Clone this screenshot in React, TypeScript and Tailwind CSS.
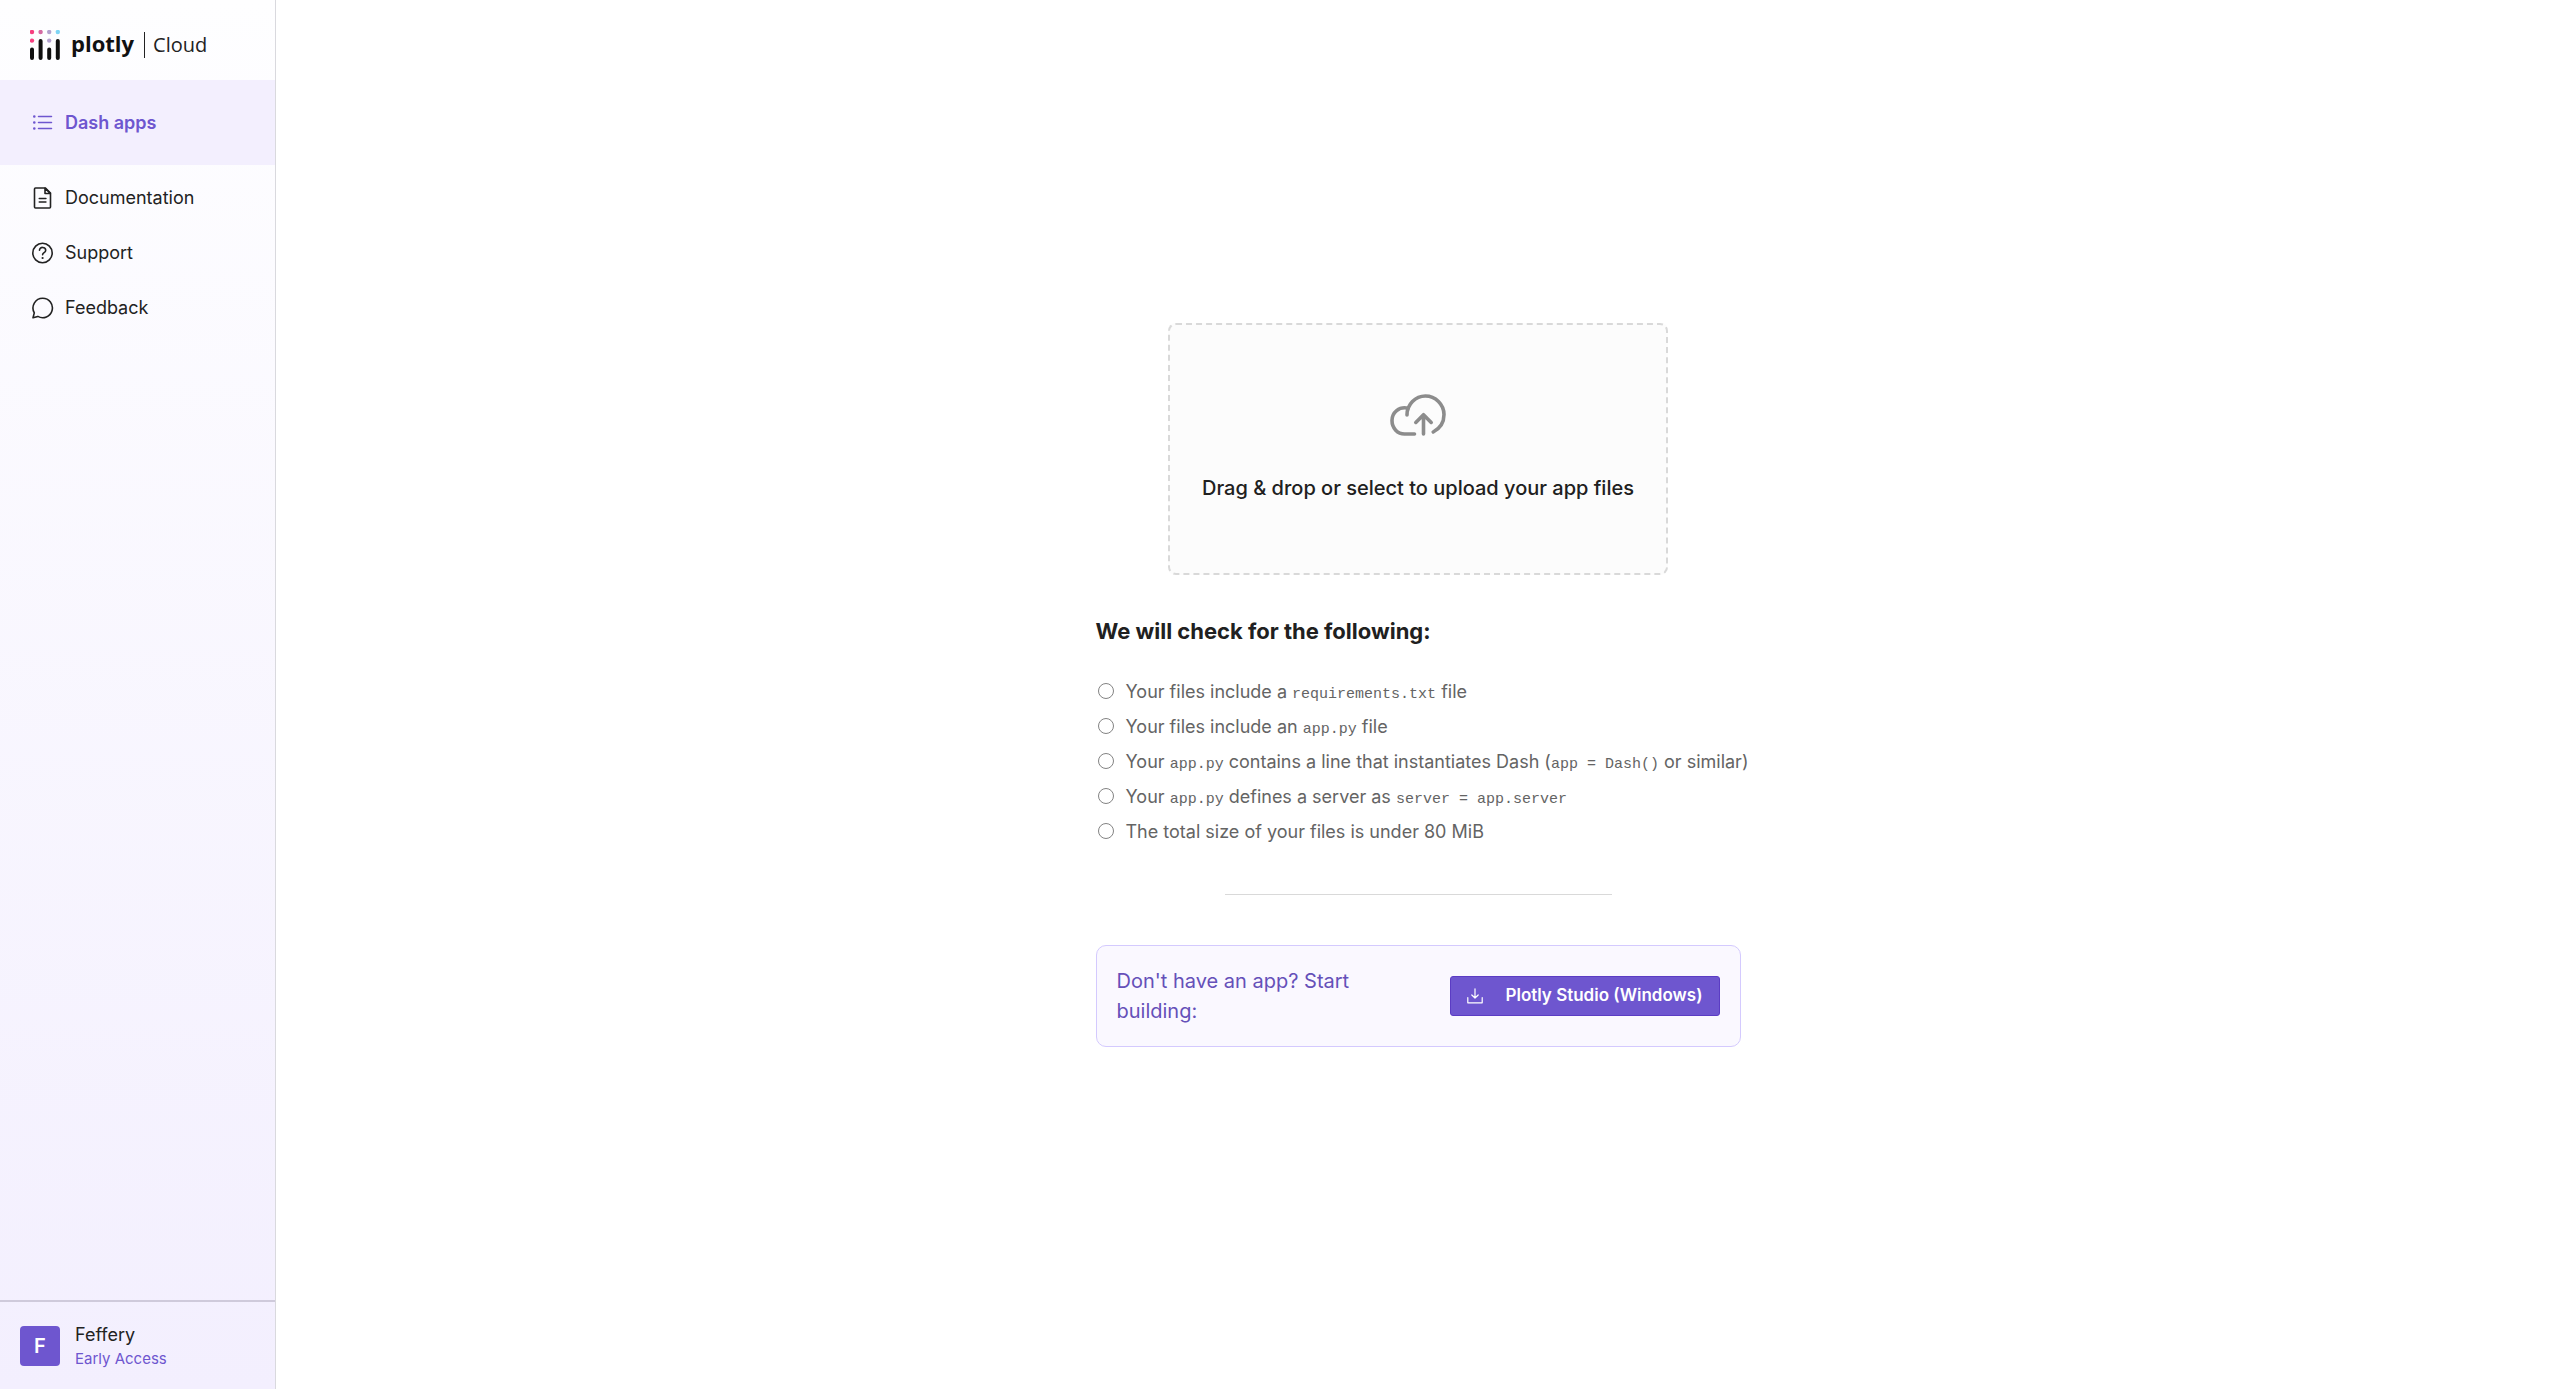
import type { ReactNode } from 'react';

const LINKS = [
  { label: 'Documentation', icon: <DocIcon /> },
  { label: 'Support', icon: <HelpIcon /> },
  { label: 'Feedback', icon: <ChatIcon /> },
];

const CHECKS: ReactNode[] = [
  <>Your files include a <Code>requirements.txt</Code> file</>,
  <>Your files include an <Code>app.py</Code> file</>,
  <>Your <Code>app.py</Code> contains a line that instantiates Dash (<Code>app = Dash()</Code> or similar)</>,
  <>Your <Code>app.py</Code> defines a server as <Code>server = app.server</Code></>,
  <>The total size of your files is under 80 MiB</>,
];

function Code({ children }: { children: ReactNode }) {
  return <code className="font-['Liberation_Mono',monospace] text-[15px] leading-none">{children}</code>;
}

function ListIcon() {
  return (
    <svg viewBox="0 0 24 24" className="size-6 shrink-0" fill="none" stroke="currentColor" strokeWidth="1.5" strokeLinecap="round">
      <path d="M7.5 5.500h13M7.500 11.500h13M7.500 17.500h13" />
      <path d="M3.300 5.500h.01M3.300 11.500h.01M3.300 17.500h.01" strokeWidth="2.600" />
    </svg>
  );
}

function DocIcon() {
  return (
    <svg viewBox="0 0 24 24" className="size-6 shrink-0" fill="none" stroke="currentColor" strokeWidth="1.6" strokeLinecap="round" strokeLinejoin="round">
      <path d="M3.500 21V3a1 1 0 0 1 1-1h10L19.500 7v14a1 1 0 0 1-1 1h-14a1 1 0 0 1-1-1z" />
      <path d="M14 2.200v5.300h5.300z" />
      <path d="M8.300 12.500h6.600M8.300 16h6.600" />
    </svg>
  );
}

function HelpIcon() {
  return (
    <svg viewBox="0 0 24 24" className="size-6 shrink-0" fill="none" stroke="currentColor" strokeWidth="1.6" strokeLinecap="round" strokeLinejoin="round">
      <circle cx="11.500" cy="12" r="9.700" />
      <path d="M8.500 9.200c0-3.800 6.200-3.600 6.200 0 0 2.600-3.100 2.200-3.100 4.600" />
      <path d="M11.600 17h.01" strokeWidth="2.200" />
    </svg>
  );
}

function ChatIcon() {
  return (
    <svg viewBox="0 0 24 24" className="size-6 shrink-0" fill="none" stroke="currentColor" strokeWidth="1.6" strokeLinecap="round" strokeLinejoin="round">
      <path d="M11.700 2.300a9.700 9.700 0 1 1-4.850 18.100L2 21.700l1.300-4.850A9.700 9.700 0 0 1 11.700 2.300z" />
    </svg>
  );
}

function CloudUploadIcon() {
  return (
    <svg viewBox="0 0 56 42" className="h-[42px] w-14" fill="none" stroke="#8c8c8c" strokeWidth="3.6" strokeLinecap="round" strokeLinejoin="round">
      <path d="M17 21c0-10.6 8.4-19 18.4-19S54 10.400 54 20.600c0 7.800-4.200 14-10.800 17.400" />
      <path d="M18 14.200C9 12.200 2 18.600 2 26.600 2 34.400 7.600 40 14.600 40H24.500" />
      <path d="M33.500 40V21M25.800 28.400l7.700-7.700 7.700 7.700" />
    </svg>
  );
}

function DownloadIcon() {
  return (
    <svg viewBox="0 0 16 16" className="size-4 shrink-0" fill="none" stroke="currentColor" strokeWidth="1.2" strokeLinecap="round" strokeLinejoin="round">
      <path d="M8 .8v9M4.800 7L8 10l3.200-3M.8 9.600v5.200h14.400V9.600" />
    </svg>
  );
}

function LogoMark() {
  return (
    <svg viewBox="0 0 30 30" className="h-[30px] w-[30px]" strokeLinecap="round" strokeWidth="4">
      <path d="M2 19.500v8.500M10.600 11v17M19.200 19.500v8.500M27.800 11v17" stroke="#0f0f0f" />
      <g>
        <circle cx="2" cy="2" r="2.2" fill="#f73f80" />
        <circle cx="2" cy="10.600" r="2.2" fill="#f73f80" />
        <circle cx="10.600" cy="2" r="2.2" fill="#d46ba3" />
        <circle cx="19.200" cy="2" r="2.2" fill="#b3a2cf" />
        <circle cx="19.200" cy="10.600" r="2.2" fill="#b3a2cf" />
        <circle cx="27.800" cy="2" r="2.2" fill="#7fd5f5" />
      </g>
    </svg>
  );
}

function Sidebar() {
  return (
    <aside className="flex w-[276px] shrink-0 flex-col border-r border-[#d9d9de] bg-linear-to-b from-[#fefeff] to-[#f3effe]">
      <a href="#" className="flex h-20 items-center pt-2.5 pl-[30px]">
        <LogoMark />
        <span className="ml-[11px] pb-1 font-['Open_Sans',sans-serif] text-[22px] font-bold text-[#111]">plotly</span>
        <span className="ml-2.5 h-[26px] w-px bg-[#222]" />
        <span className="ml-2 font-['Open_Sans',sans-serif] text-xl text-[#222]">Cloud</span>
      </a>

      <nav className="flex flex-col">
        <a href="#" className="flex h-[85px] items-center gap-2.5 bg-[#f3effe] pl-[31px] text-lg font-semibold text-[#6e56cf]">
          <ListIcon />
          Dash apps
        </a>
        <div className="mt-[5px] flex flex-col">
          {LINKS.map(link => (
            <a key={link.label} href="#" className="flex h-[55px] items-center gap-2.5 pl-[31px] text-lg text-[#222]">
              {link.icon}
              {link.label}
            </a>
          ))}
        </div>
      </nav>

      {/* Account */}
      <button type="button" className="mt-auto flex h-[89px] items-center gap-[15px] border-t-2 border-[#cfcadb] pl-5 text-left">
        <span className="flex size-10 items-center justify-center rounded bg-[#6e56cf] text-xl font-semibold text-white">F</span>
        <span className="flex flex-col pt-0.5">
          <span className="text-lg leading-6 text-[#222]">Feffery</span>
          <span className="text-[15px] leading-6 text-[#6e56cf]">Early Access</span>
        </span>
      </button>
    </aside>
  );
}

export default function App() {
  return (
    <div className="flex min-h-screen bg-white font-['Inter',sans-serif]">
      <Sidebar />

      <main className="flex flex-1 flex-col items-center justify-center pb-5">
        <div className="flex w-full max-w-[645px] flex-col">
          <button type="button" className="flex h-[252px] w-[500px] max-w-full flex-col items-center self-center rounded-lg border-2 border-dashed border-[#d9d9d9] bg-[#fcfcfc] pt-[69px]">
            <CloudUploadIcon />
            <span className="mt-[37px] text-xl leading-[30px] font-medium text-[#202020]">Drag &amp; drop or select to upload your app files</span>
          </button>

          <h2 className="mt-10 text-[22px] leading-8 font-bold text-[#202020]">We will check for the following:</h2>
          <ul className="mt-[27px] flex flex-col text-lg leading-[35px] text-[#646464]">
            {CHECKS.map((check, i) => (
              <li key={i} className="flex items-center gap-3 pl-0.5 whitespace-nowrap">
                <span className="size-4 shrink-0 rounded-full border border-[#838383]" />
                <span>{check}</span>
              </li>
            ))}
          </ul>

          <hr className="mt-[45px] w-3/5 self-center border-[#d9d9d9]" />

          {/* Studio download */}
          <div className="mt-[50px] flex items-center justify-between rounded-[10px] border border-[#d4cafe] bg-[#faf8ff] px-5 py-5">
            <p className="w-[270px] text-xl leading-[30px] text-[#6550b9]">Don't have an app? Start building:</p>
            <button type="button" className="flex h-10 items-center gap-[22px] rounded-[3px] border border-[#5b3cc4] bg-[#6e56cf] px-4 text-[17px] font-semibold text-white">
              <DownloadIcon />
              Plotly Studio (Windows)
            </button>
          </div>
        </div>
      </main>
    </div>
  );
}
